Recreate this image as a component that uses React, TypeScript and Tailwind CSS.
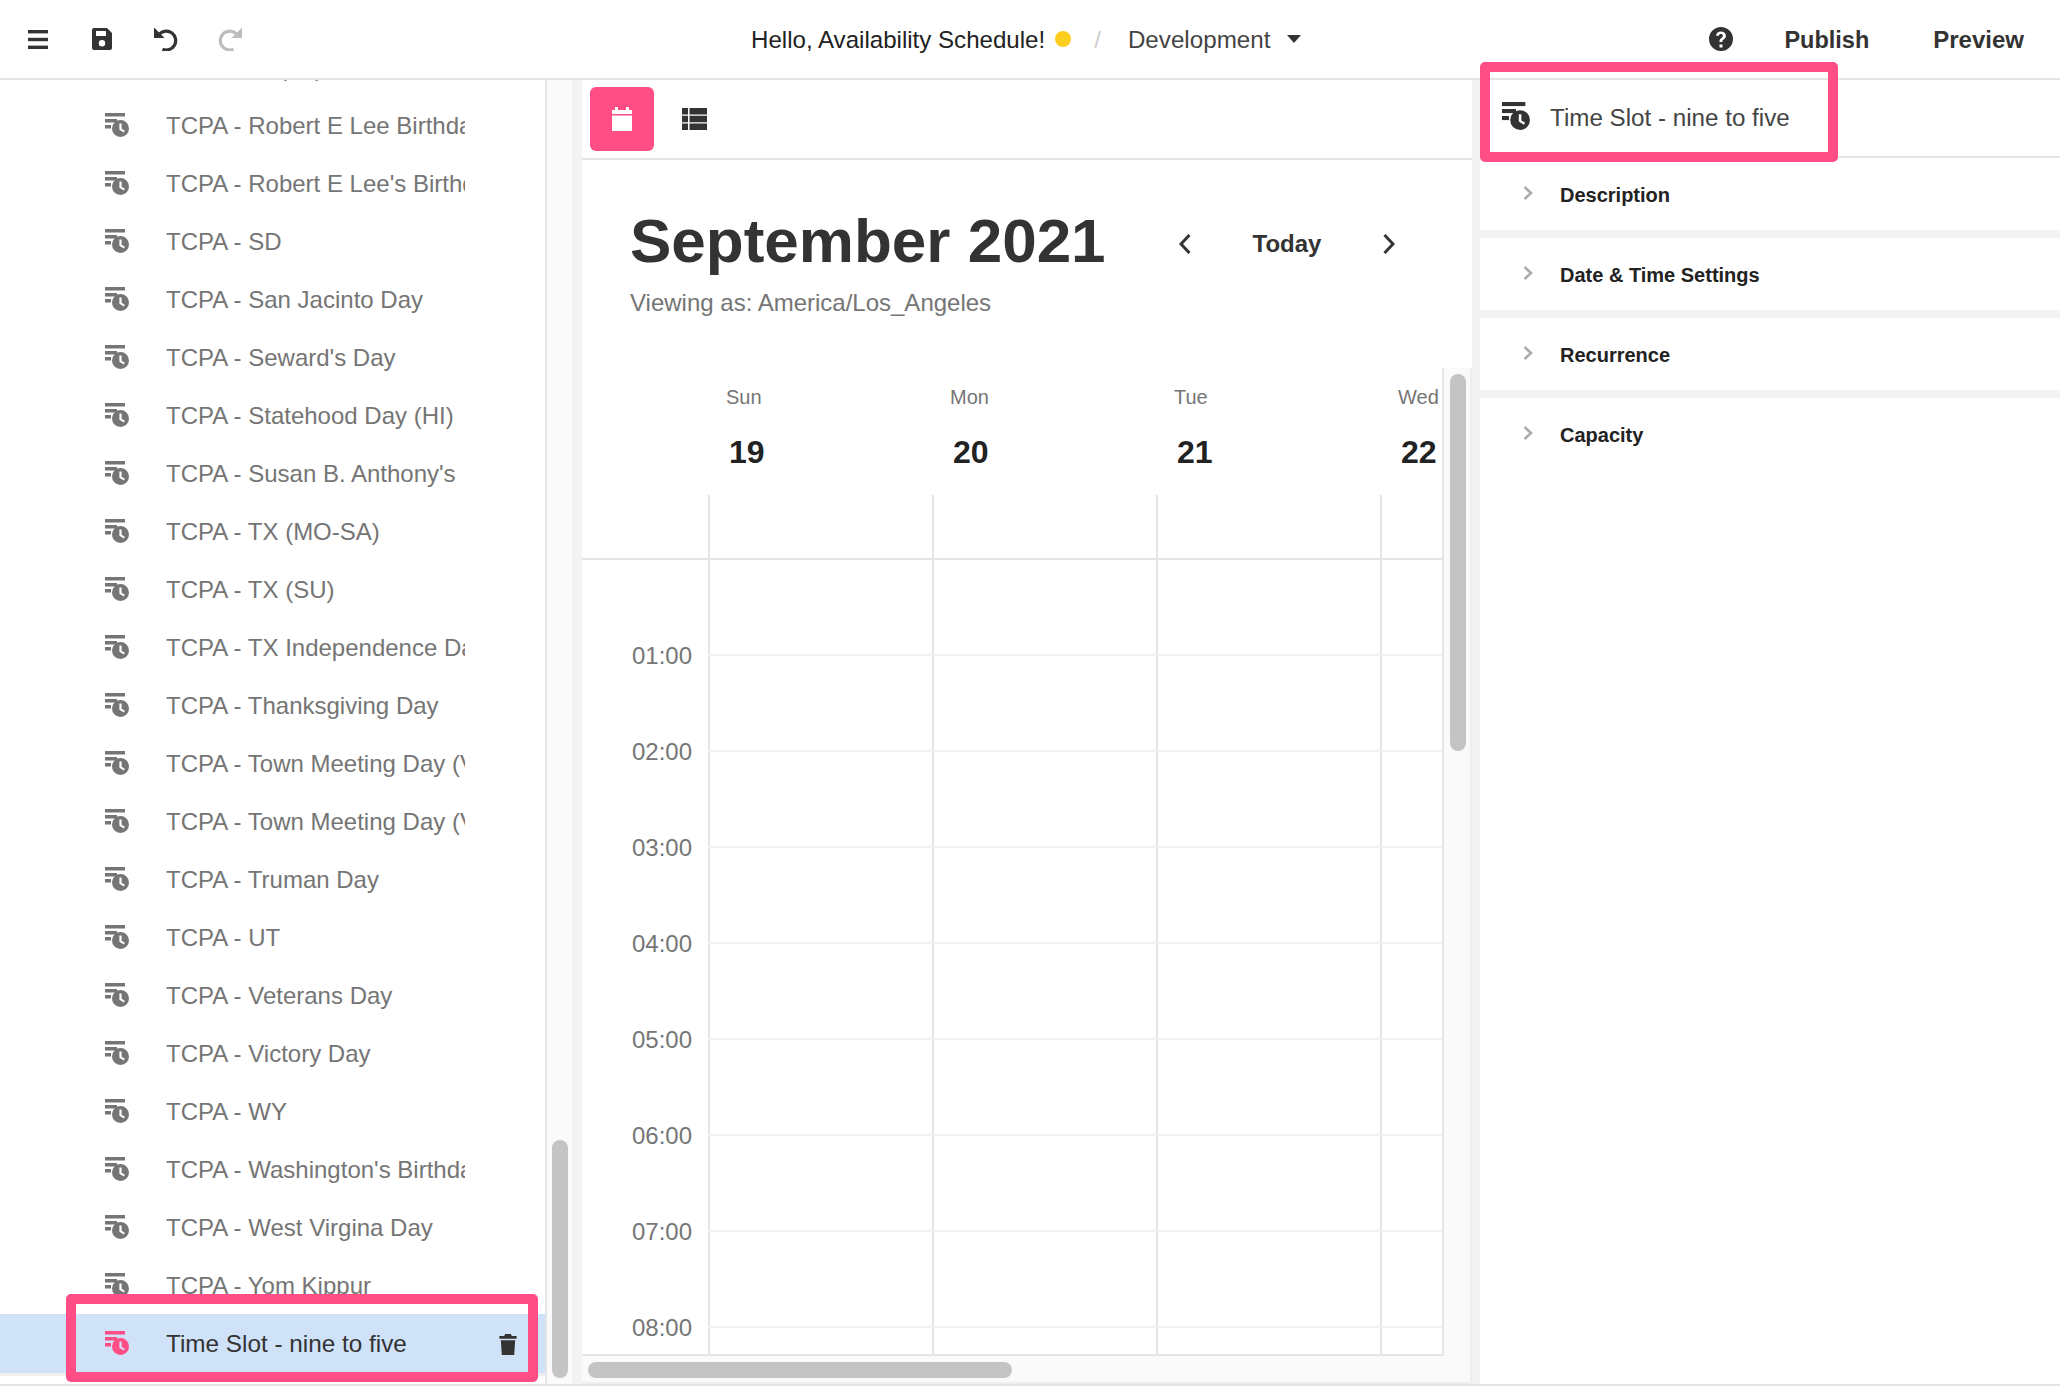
const font = "font-['Liberation_Sans',Arial,sans-serif]";

const rows = [
  "TCPA - RI (VJ)",
  "TCPA - Robert E Lee Birthday",
  "TCPA - Robert E Lee's Birthday",
  "TCPA - SD",
  "TCPA - San Jacinto Day",
  "TCPA - Seward's Day",
  "TCPA - Statehood Day (HI)",
  "TCPA - Susan B. Anthony's",
  "TCPA - TX (MO-SA)",
  "TCPA - TX (SU)",
  "TCPA - TX Independence Day",
  "TCPA - Thanksgiving Day",
  "TCPA - Town Meeting Day (VT)",
  "TCPA - Town Meeting Day (VT)",
  "TCPA - Truman Day",
  "TCPA - UT",
  "TCPA - Veterans Day",
  "TCPA - Victory Day",
  "TCPA - WY",
  "TCPA - Washington's Birthday",
  "TCPA - West Virgina Day",
  "TCPA - Yom Kippur",
];

const days = [
  { name: "Sun", num: "19" },
  { name: "Mon", num: "20" },
  { name: "Tue", num: "21" },
  { name: "Wed", num: "22" },
];

const hours = ["01:00", "02:00", "03:00", "04:00", "05:00", "06:00", "07:00", "08:00", "09:00"];
const sections = ["Description", "Date & Time Settings", "Recurrence", "Capacity"];

const SlotIcon = ({ className }: { className: string }) => (
  <svg viewBox="0 0 24 24" className={className} fill="currentColor">
    <rect x="0" y="0" width="20" height="3.5" />
    <rect x="0" y="6" width="12" height="3.5" />
    <rect x="0" y="12" width="6" height="3.5" />
    <path
      fillRule="evenodd"
      d="M15.5 7a8.5 8.5 0 1 1 0 17 8.5 8.5 0 0 1 0-17zM14.4 10.5v6.2l4.4 2.8 1-1.7-3.2-2v-5.3z"
    />
  </svg>
);

const Header = () => (
  <header className="flex h-[80px] shrink-0 items-center border-b-2 border-[#e5e5e5] bg-white">
    <div className="flex w-[751px] items-center text-[#333]">
      <svg viewBox="0 0 20 19" className="ml-[28px] h-[19px] w-[20px]" fill="currentColor">
        <rect width="20" height="3.4" />
        <rect y="7.8" width="20" height="3.4" />
        <rect y="15.6" width="20" height="3.4" />
      </svg>
      <svg viewBox="0 0 20 22" className="ml-[44px] h-[22px] w-[20px]" fill="currentColor">
        <path
          fillRule="evenodd"
          d="M2 0h13l5 5v15a2 2 0 0 1-2 2H2a2 2 0 0 1-2-2V2a2 2 0 0 1 2-2zM4 3v5h10V3zM10 12a3.2 3.2 0 1 0 0 6.400a3.200 3.200 0 0 0 0-6.400z"
        />
      </svg>
      <svg viewBox="0 0 24 24" className="ml-[42px] h-[24px] w-[24px]" fill="currentColor">
        <path d="M0 0.500v10.500h10.500z" />
        <path d="M5.500 6.800a9.500 9.500 0 1 1 3 15.500" fill="none" stroke="currentColor" strokeWidth="3.200" />
      </svg>
      <svg viewBox="0 0 24 24" className="ml-[40px] h-[24px] w-[24px] text-[#bdbdbd]" fill="currentColor">
        <path d="M24 0.500v10.500h-10.500z" />
        <path d="M18.500 6.800a9.500 9.500 0 1 0-3 15.500" fill="none" stroke="currentColor" strokeWidth="3.200" />
      </svg>
    </div>
    <span className="mt-[2px] text-[24.100px] text-[#222]">Hello, Availability Schedule!</span>
    <span className="ml-[10px] h-[16px] w-[16px] rounded-full bg-[#ffcd1e]" />
    <span className="mt-[2px] ml-[23px] text-[24px] text-[#d0d0d0]">/</span>
    <span className="mt-[2px] ml-[27px] text-[24.200px] text-[#444]">Development</span>
    <svg viewBox="0 0 14 8" className="ml-[17px] h-[8px] w-[14px] text-[#333]" fill="currentColor">
      <path d="M0 0h14L7 8z" />
    </svg>
    <div className="ml-auto flex items-center pr-[36px] text-[24px] font-bold text-[#333]">
      <svg viewBox="0 0 24 24" className="h-[24px] w-[24px]" fill="currentColor">
        <path
          fillRule="evenodd"
          d="M12 0a12 12 0 1 1 0 24 12 12 0 0 1 0-24zM10.500 17.500v3h3v-3zM12 4.500c-3 0-4.800 1.700-5 4.300h2.900c.1-1 .9-1.700 2-1.700 1.200 0 2 .7 2 1.700 0 .9-.5 1.400-1.500 2.100-1.400.9-1.900 1.800-1.900 3.200v.9h2.900v-.6c0-.8.300-1.200 1.300-1.900 1.300-.9 2.200-2 2.200-3.800 0-2.500-2-4.200-4.900-4.200z"
        />
      </svg>
      <span className="mt-[3px] ml-[51px] text-[23.500px]">Publish</span>
      <span className="mt-[2px] ml-[64px]">Preview</span>
    </div>
  </header>
);

const Sidebar = () => (
  <aside className="flex w-[582px] shrink-0">
    <div className="h-full w-[547px] overflow-hidden border-r-2 border-[#e5e5e5] bg-white">
      <div className="-mt-[42px]">
        {rows.map((label, i) => (
          <div key={i} className="flex h-[58px] items-center pl-[105px] text-[#757575]">
            <SlotIcon className="-mt-[1px] h-[24px] w-[24px] shrink-0" />
            <span className="ml-[37px] w-[299px] overflow-hidden pt-[2px] text-[24px] whitespace-nowrap">{label}</span>
          </div>
        ))}
        <div className="flex h-[59px] items-center bg-[#cfe2f8] pr-[28px] pl-[105px] text-[#333]">
          <SlotIcon className="-mt-[1px] h-[24px] w-[24px] shrink-0 text-[#ff4d85]" />
          <span className="ml-[37px] pt-[2px] text-[24.300px] whitespace-nowrap">Time Slot - nine to five</span>
          <svg viewBox="0 0 18 22" className="mt-[2px] ml-auto h-[21px] w-[18px]" fill="currentColor">
            <path d="M6 0h6l1 2h5v3H0V2h5zM1.500 6.500h15L15.500 22h-13z" />
          </svg>
        </div>
        <div className="h-[3px] bg-[#eeeeee]" />
      </div>
    </div>
    <div className="relative w-[25px] bg-[#fafafa]">
      <div className="absolute top-[1060px] bottom-[6px] left-[5px] w-[16px] rounded-full bg-[#c4c4c4]" />
    </div>
    <div className="w-[10px] bg-[#f3f3f3]" />
  </aside>
);

const CalendarPanel = () => (
  <main className="flex w-[890px] shrink-0 flex-col overflow-hidden">
    <div className="flex h-[80px] shrink-0 items-center border-b-2 border-[#e5e5e5] pl-[8px]">
      <div className="flex h-[64px] w-[64px] items-center justify-center rounded-[6px] bg-[#ff4d85]">
        <svg viewBox="0 0 20 24" className="h-[24px] w-[20px] text-white" fill="currentColor">
          <path d="M3 0h3v3h8V0h3v3h3v4H0V3h3zM0 8.500h20V24H0z" />
        </svg>
      </div>
      <svg viewBox="0 0 25 22" className="ml-[28px] h-[22px] w-[25px] text-[#333]" fill="currentColor">
        <path d="M0 0h6v6.500H0zM7.500 0H25v6.500H7.500zM0 7.800h6v6.400H0zM7.500 7.800H25v6.400H7.500zM0 15.500h6V22H0zM7.500 15.500H25V22H7.500z" />
      </svg>
    </div>
    <div className="flex h-[208px] shrink-0 flex-col pt-[45px] pl-[48px]">
      <div className="flex items-center">
        <h1 className="w-[549px] text-[62px] leading-[72px] font-bold text-[#333]">September 2021</h1>
        <svg viewBox="0 0 12 20" className="mt-[5px] h-[20px] w-[12px] text-[#333]" fill="none" stroke="currentColor" strokeWidth="3">
          <path d="M10.500 1 2 10l8.500 9" />
        </svg>
        <span className="mt-[5px] w-[192px] text-center text-[24px] font-bold text-[#333]">Today</span>
        <svg viewBox="0 0 12 20" className="mt-[5px] h-[20px] w-[12px] text-[#333]" fill="none" stroke="currentColor" strokeWidth="3">
          <path d="M1.500 1 10 10l-8.500 9" />
        </svg>
      </div>
      <p className="mt-[8px] text-[24px] text-[#757575]">Viewing as: America/Los_Angeles</p>
    </div>
    <div className="flex min-h-0 flex-1 flex-col bg-[#fafafa]">
      <div className="flex min-h-0 flex-1">
        <div className="w-[862px] shrink-0 overflow-hidden border-r-2 border-b-2 border-[#e5e5e5] bg-white">
          <div className="flex h-[127px] pl-[126px]">
            {days.map((d) => (
              <div key={d.name} className="w-[224px] shrink-0 pt-[17px] pl-[18px]">
                <div className="text-[20px] leading-[24px] text-[#757575]">{d.name}</div>
                <div className="mt-[25px] ml-[3px] text-[32px] leading-[36px] font-bold text-[#222]">{d.num}</div>
              </div>
            ))}
          </div>
          <div className="flex h-[65px] border-b-2 border-[#e5e5e5] pl-[126px]">
            {days.map((d) => (
              <div key={d.name} className="w-[224px] shrink-0 border-l-2 border-[#e5e5e5]" />
            ))}
          </div>
          {hours.map((h) => (
            <div key={h} className="relative flex h-[96px] pl-[126px]">
              {days.map((d) => (
                <div key={d.name} className="w-[224px] shrink-0 border-b-2 border-l-2 border-b-[#f3f3f3] border-l-[#e5e5e5]" />
              ))}
              <span className="absolute bottom-[-16px] left-[50px] text-[24px] leading-[32px] text-[#757575]">{h}</span>
            </div>
          ))}
        </div>
        <div className="relative w-[28px] border-r-2 border-[#eeeeee]">
          <div className="absolute top-[6px] left-[6px] h-[377px] w-[16px] rounded-full bg-[#c4c4c4]" />
        </div>
      </div>
      <div className="h-[28px] shrink-0 border-r-2 border-b-2 border-[#eeeeee] pt-[6px] pl-[6px]">
        <div className="h-[16px] w-[424px] rounded-full bg-[#c4c4c4]" />
      </div>
    </div>
  </main>
);

const DetailPanel = () => (
  <section className="flex min-w-0 flex-1 flex-col border-l-[8px] border-[#f3f3f3]">
    <div className="flex h-[78px] shrink-0 items-center border-b-2 border-[#e5e5e5] pl-[22px] text-[#333]">
      <SlotIcon className="-mt-[4px] h-[28px] w-[28px]" />
      <span className="ml-[20px] text-[24.200px] text-[#444]">Time Slot - nine to five</span>
    </div>
    {sections.map((s, i) => (
      <div
        key={s}
        className={
          i === sections.length - 1
            ? "flex flex-1 items-start pt-[25px] pl-[43px]"
            : "flex h-[80px] shrink-0 items-start border-b-[8px] border-[#f3f3f3] pt-[25px] pl-[43px]"
        }
      >
        <svg viewBox="0 0 10 14" className="mt-[3px] h-[14px] w-[10px] text-[#aaa]" fill="none" stroke="currentColor" strokeWidth="2.500">
          <path d="M1.500 1 8 7l-6.500 6" />
        </svg>
        <span className="ml-[27px] text-[20px] leading-[24px] font-bold text-[#222]">{s}</span>
      </div>
    ))}
  </section>
);

const App = () => (
  <div className={`relative flex h-[1388px] w-[2060px] flex-col overflow-hidden bg-white ${font}`}>
    <Header />
    <div className="flex h-[1304px] shrink-0">
      <Sidebar />
      <CalendarPanel />
      <DetailPanel />
    </div>
    <div className="h-[4px] border-t-2 border-[#e5e5e5]" />
    {/* highlight boxes drawn over the screen */}
    <div className="absolute top-[1294px] left-[66px] h-[88px] w-[472px] rounded-[5px] border-[10px] border-[#ff4d85]" />
    <div className="absolute top-[62px] left-[1480px] h-[100px] w-[358px] rounded-[5px] border-[10px] border-[#ff4d85]" />
  </div>
);

export default App;
